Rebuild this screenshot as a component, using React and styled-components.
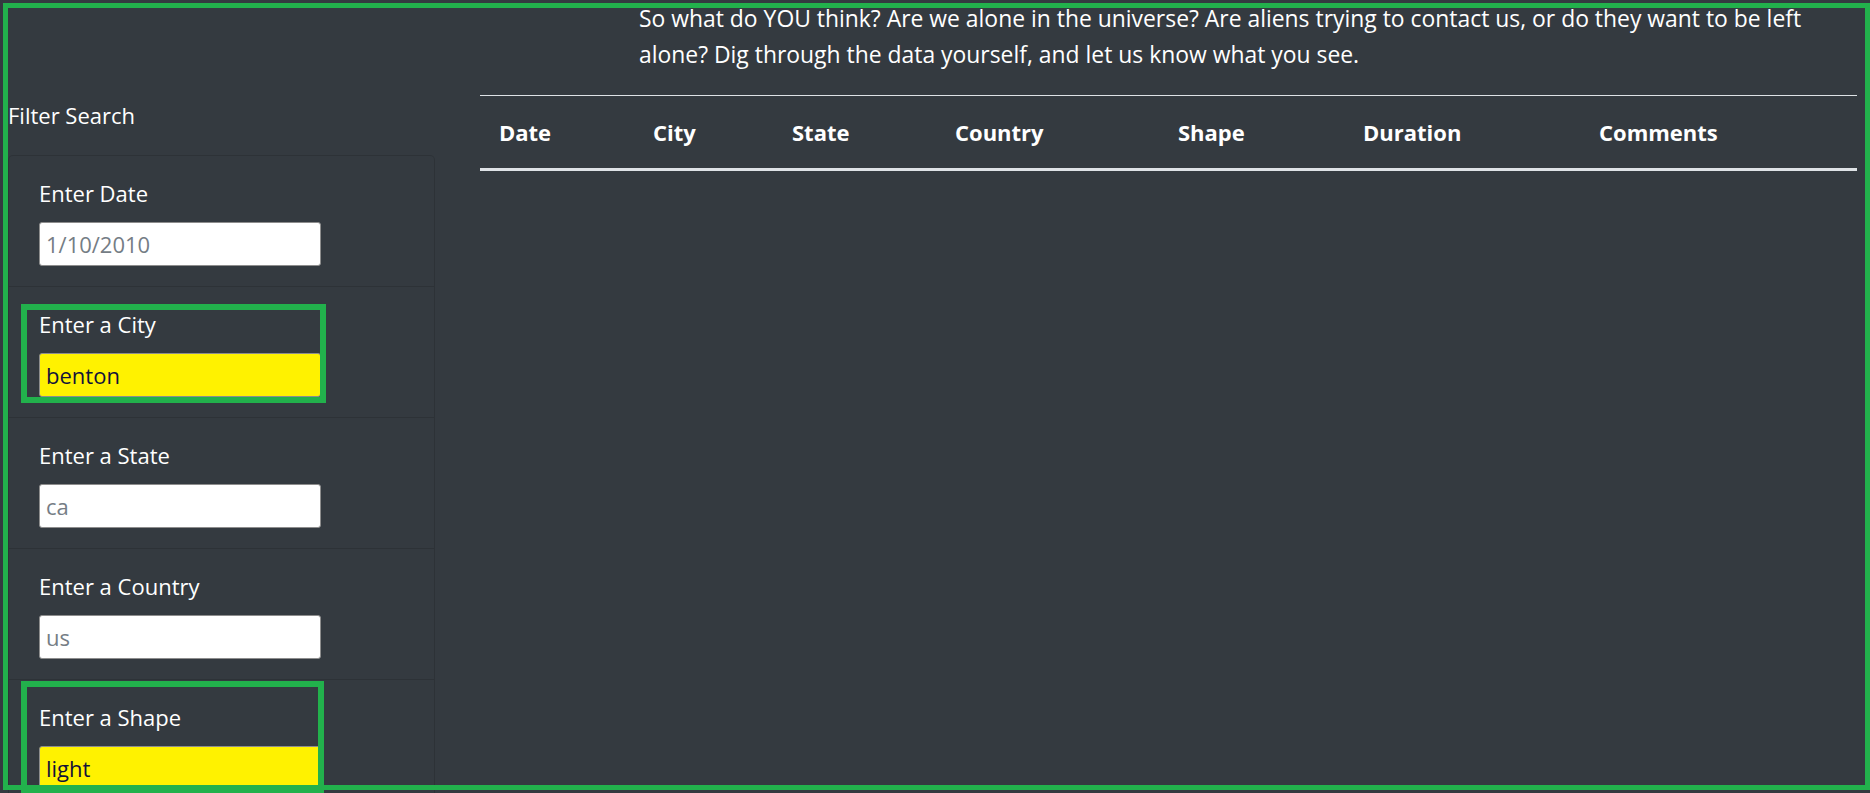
import React from 'react';
import styled, { createGlobalStyle } from 'styled-components';

const GlobalStyle = createGlobalStyle`
  html, body {
    margin: 0;
    padding: 0;
    background: #343a40;
    overflow: hidden;
  }
  body {
    font-family: "Open Sans", "Noto Sans", sans-serif;
    font-size: 22px;
    color: #fff;
  }
  * { box-sizing: border-box; }
`;

const Page = styled.div`
  position: relative;
  width: 1870px;
  height: 793px;
  overflow: hidden;
`;

const Intro = styled.p`
  margin: 1px 0 22px;
  padding: 0 13px 0 639px;
  font-size: 22.9px;
  line-height: 36px;
`;

const Content = styled.div`
  display: flex;
  gap: 45px;
  padding: 0 13px 0 8px;
`;

const Sidebar = styled.aside`
  width: 427px;
  flex-shrink: 0;
  padding-top: 4px;
`;

const SideTitle = styled.div`
  line-height: 33px;
  margin-bottom: 23px;
`;

const FilterList = styled.ul`
  list-style: none;
  margin: 0;
  padding: 0;
  border: 1px solid rgba(0, 0, 0, 0.13);
  border-bottom: none;
  border-radius: 5px 5px 0 0;
`;

const FilterItem = styled.li`
  position: relative;
  padding: 21px 30px 20px;
  border-top: 1px solid rgba(0, 0, 0, 0.13);
  &:first-child { border-top: none; }
`;

const Label = styled.label`
  display: block;
  line-height: 33px;
  margin-bottom: 12px;
`;

const Input = styled.input`
  display: block;
  width: 282px;
  height: 44px;
  padding: 0 6px;
  border: 1px solid #8d8d8d;
  border-radius: 3px;
  font-family: inherit;
  font-size: 22px;
  color: #12123a;
  background: ${p => (p.$highlight ? '#fff200' : '#fff')};
  outline: none;
  &::placeholder { color: #757d85; }
`;

const Mark = styled.div`
  position: absolute;
  left: 12px;
  top: ${p => p.$top}px;
  width: ${p => p.$width}px;
  height: ${p => p.$height}px;
  border: 6px solid #22b14c;
  pointer-events: none;
`;

const Frame = styled.div`
  position: absolute;
  left: 3px;
  top: 3px;
  width: 1867px;
  height: 787px;
  border: 5px solid #22b14c;
  pointer-events: none;
`;

const TableArea = styled.section`
  flex: 1;
`;

const Table = styled.table`
  width: 100%;
  table-layout: fixed;
  border-collapse: collapse;
`;

const HeadCell = styled.th`
  width: ${p => p.$w}px;
  text-align: left;
  font-weight: 700;
  padding: 18px 8px 18px 19px;
  line-height: 36px;
  border-top: 1px solid #dee2e6;
  border-bottom: 3px solid #dee2e6;
  white-space: nowrap;
`;

const columns = [
  ['Date', 154],
  ['City', 139],
  ['State', 163],
  ['Country', 223],
  ['Shape', 185],
  ['Duration', 236],
  ['Comments', 277],
];

const filters = [
  { label: 'Enter Date', placeholder: '1/10/2010' },
  { label: 'Enter a City', value: 'benton', mark: { top: 17, width: 305, height: 99 } },
  { label: 'Enter a State', placeholder: 'ca' },
  { label: 'Enter a Country', placeholder: 'us' },
  { label: 'Enter a Shape', value: 'light', mark: { top: 1, width: 303, height: 114 } },
];

export default function App() {
  return (
    <Page>
      <GlobalStyle />
      <Intro>
        So what do YOU think? Are we alone in the universe? Are aliens trying to contact us, or do
        they want to be left alone? Dig through the data yourself, and let us know what you see.
      </Intro>
      <Content>
        <Sidebar>
          <SideTitle>Filter Search</SideTitle>
          <FilterList>
            {filters.map(f => (
              <FilterItem key={f.label}>
                <Label>{f.label}</Label>
                <Input
                  type="text"
                  placeholder={f.placeholder}
                  defaultValue={f.value}
                  $highlight={!!f.value}
                />
                {f.mark && <Mark $top={f.mark.top} $width={f.mark.width} $height={f.mark.height} />}
              </FilterItem>
            ))}
          </FilterList>
        </Sidebar>
        <TableArea>
          <Table>
            <thead>
              <tr>
                {columns.map(([name, w]) => (
                  <HeadCell key={name} $w={w}>{name}</HeadCell>
                ))}
              </tr>
            </thead>
            <tbody />
          </Table>
        </TableArea>
      </Content>
      <Frame />
    </Page>
  );
}
